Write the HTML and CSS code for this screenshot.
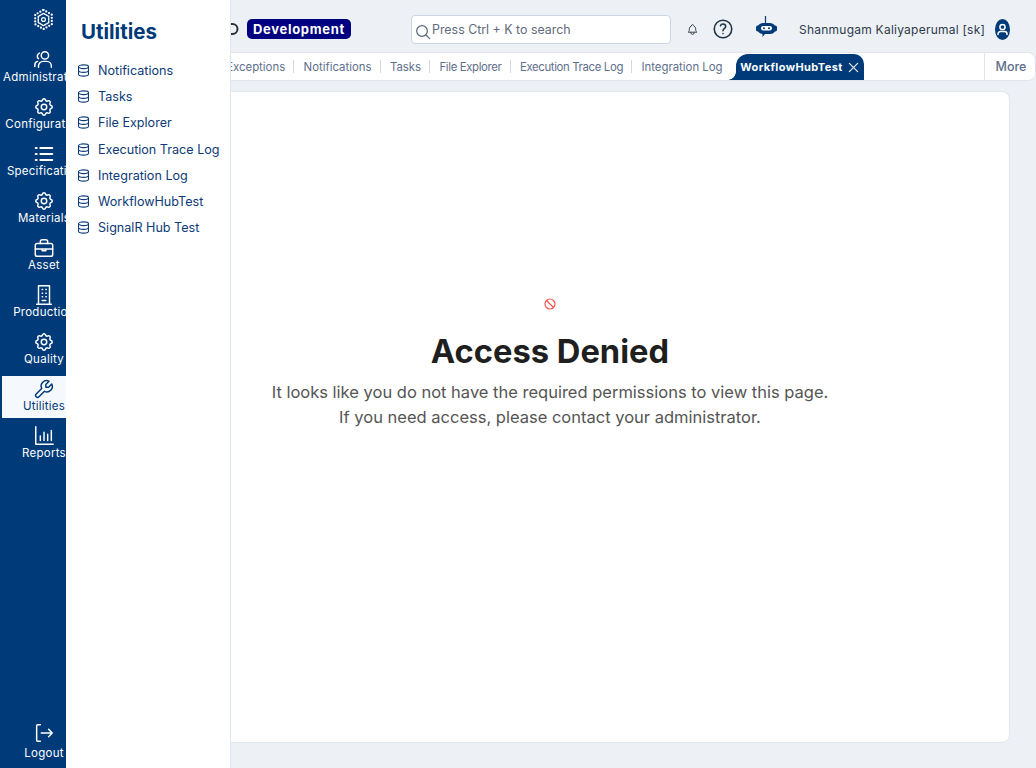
FILE: index.html
```html
<!DOCTYPE html>
<html lang="en">
<head>
<meta charset="utf-8">
<title>Access Denied</title>
<link rel="stylesheet" href="styles.css">
</head>
<body>
<svg class="defs" aria-hidden="true">
  <defs>
    <symbol id="gear" viewBox="0 0 24 24"><path d="M10.325 4.317c.426-1.756 2.924-1.756 3.35 0a1.724 1.724 0 0 0 2.573 1.066c1.543-.94 3.31.826 2.37 2.37a1.724 1.724 0 0 0 1.065 2.572c1.756.426 1.756 2.924 0 3.35a1.724 1.724 0 0 0-1.066 2.573c.94 1.543-.826 3.31-2.37 2.37a1.724 1.724 0 0 0-2.572 1.065c-.426 1.756-2.924 1.756-3.35 0a1.724 1.724 0 0 0-2.573-1.066c-1.543.94-3.31-.826-2.37-2.37a1.724 1.724 0 0 0-1.065-2.572c-1.756-.426-1.756-2.924 0-3.35a1.724 1.724 0 0 0 1.066-2.573c-.94-1.543.826-3.31 2.37-2.37 1 .608 2.296.07 2.572-1.065z"/><circle cx="12" cy="12" r="3"/></symbol>
    <symbol id="db" viewBox="0 0 24 24"><ellipse cx="12" cy="6" rx="8" ry="3"/><path d="M4 6v6c0 1.660 3.580 3 8 3s8-1.340 8-3V6"/><path d="M4 12v6c0 1.660 3.580 3 8 3s8-1.340 8-3v-6"/></symbol>
  </defs>
</svg>

<nav class="rail">
  <svg class="rail-logo" viewBox="0 0 24 24"><circle cx="12" cy="12" r="2.200"/><path class="logo-inner" d="M12 5l6 3.500v7L12 19l-6-3.500v-7z"/><path class="logo-outer" d="M12 1l9.500 5.500v11L12 23l-9.500-5.500v-11z"/></svg>
  <a class="rail-item"><svg class="rail-icon" viewBox="0 0 24 24"><circle cx="13" cy="7" r="4"/><path d="M6 20v-1.500a5 5 0 0 1 5-5h4a5 5 0 0 1 5 5V20"/><path d="M7 4.500a3.500 3.500 0 0 0-1 6M5 13.500a4 4 0 0 0-3 4V19"/></svg><span>Administration</span></a>
  <a class="rail-item"><svg class="rail-icon"><use href="#gear"/></svg><span>Configuration</span></a>
  <a class="rail-item"><svg class="rail-icon" viewBox="0 0 24 24"><path class="thick" d="M8 5.500h13M8 12h13M8 18.500h13M3 5.500h1M3 12h1M3 18.500h1"/></svg><span>Specification</span></a>
  <a class="rail-item"><svg class="rail-icon"><use href="#gear"/></svg><span>Materials</span></a>
  <a class="rail-item"><svg class="rail-icon" viewBox="0 0 24 24"><rect x="2.500" y="7" width="19" height="14" rx="2"/><path d="M8 7V5a2 2 0 0 1 2-2h4a2 2 0 0 1 2 2v2M2.500 13h19M10 13v2h4v-2"/></svg><span>Asset</span></a>
  <a class="rail-item"><svg class="rail-icon" viewBox="0 0 24 24"><path d="M4 22h16M6 22V2h12v20M10 6h.500M14 6h.500M10 10h.500M14 10h.500M10 14h.500M14 14h.500M10 18h4"/></svg><span>Production</span></a>
  <a class="rail-item"><svg class="rail-icon"><use href="#gear"/></svg><span>Quality</span></a>
  <a class="rail-item active"><svg class="rail-icon flip" viewBox="0 0 24 24"><path d="M7 10h3V7L6.500 3.500a6 6 0 0 1 8 8l6 6a2 2 0 0 1-3 3l-6-6a6 6 0 0 1-8-8L7 10"/></svg><span>Utilities</span></a>
  <a class="rail-item"><svg class="rail-icon" viewBox="0 0 24 24"><path d="M3 2v19h19M8 17v-5M12 17V8M16 17v-7M20 17V6"/></svg><span>Reports</span></a>
  <a class="rail-item logout"><svg class="rail-icon" viewBox="0 0 24 24"><path d="M8 3H5a1 1 0 0 0-1 1v16a1 1 0 0 0 1 1h3M9 12h12M17 8l4 4-4 4"/></svg><span>Logout</span></a>
</nav>

<aside class="flyout">
  <h2 class="flyout-title">Utilities</h2>
  <ul class="flyout-list">
    <li><svg class="db"><use href="#db"/></svg>Notifications</li>
    <li><svg class="db"><use href="#db"/></svg>Tasks</li>
    <li><svg class="db"><use href="#db"/></svg>File Explorer</li>
    <li><svg class="db"><use href="#db"/></svg>Execution Trace Log</li>
    <li><svg class="db"><use href="#db"/></svg>Integration Log</li>
    <li><svg class="db"><use href="#db"/></svg>WorkflowHubTest</li>
    <li><svg class="db"><use href="#db"/></svg>SignalR Hub Test</li>
  </ul>
</aside>

<div class="main">
  <header class="topbar">
    <svg class="brand" viewBox="0 0 14 14"><path d="M1 2h5.500a5 5 0 0 1 0 10H1"/></svg>
    <span class="env">Development</span>
    <div class="search">
      <svg class="search-icon" viewBox="0 0 24 24"><circle cx="10.500" cy="10.500" r="8"/><path d="M16.500 16.500L22 22"/></svg>
      <span>Press Ctrl + K to search</span>
    </div>
    <svg class="bell" viewBox="0 0 24 24"><path d="M10 5a2 2 0 1 1 4 0 7 7 0 0 1 4 6v3a4 4 0 0 0 2 3H4a4 4 0 0 0 2-3v-3a7 7 0 0 1 4-6M9 17v1a3 3 0 0 0 6 0v-1"/></svg>
    <svg class="help" viewBox="0 0 24 24"><circle cx="12" cy="12" r="10.500"/><path d="M12 17.500v.01M12 14c0-1.500.7-2 1.500-2.500 1-.6 1.700-1.300 1.700-2.600A3.100 3.100 0 0 0 12 6a3.200 3.200 0 0 0-3 2"/></svg>
    <svg class="bot" viewBox="0 0 21 21"><path class="bot-ant" d="M9.500 0v7"/><path class="bot-body" d="M7 7h7a6 6 0 0 1 5 2.500h.300A1.700 1.700 0 0 1 21 11.200v2.600a1.700 1.700 0 0 1-1.700 1.700H19a6 6 0 0 1-5 2.500H9l-2.500 3v-3A6 6 0 0 1 2 15.500h-.300A1.700 1.700 0 0 1 0 13.800v-2.600a1.700 1.700 0 0 1 1.700-1.700H2A6 6 0 0 1 7 7z"/><rect class="bot-eye" x="5" y="10" width="11" height="4.500" rx="2.200"/><circle class="bot-pupil" cx="8" cy="12.250" r="1"/><circle class="bot-pupil" cx="13" cy="12.250" r="1"/></svg>
    <span class="user">Shanmugam Kaliyaperumal [sk]</span>
    <span class="avatar"><svg viewBox="0 0 15 21"><circle cx="7.500" cy="8" r="2.600"/><path d="M3 15.500v-.5a2.500 2.500 0 0 1 2.500-2.500h4A2.500 2.500 0 0 1 12 15v.5"/></svg></span>
  </header>

  <div class="tabbar">
    <div class="tabs">
      <span class="tab">Exceptions</span>
      <span class="tab">Notifications</span>
      <span class="tab">Tasks</span>
      <span class="tab tight">File Explorer</span>
      <span class="tab tight">Execution Trace Log</span>
      <span class="tab last">Integration Log</span>
      <span class="tab-active">WorkflowHubTest<svg viewBox="0 0 12 12"><path d="M1.500 1.500l9 9M10.500 1.500l-9 9"/></svg></span>
    </div>
    <span class="more">More</span>
  </div>

  <section class="card">
    <svg class="ban" viewBox="0 0 24 24"><circle cx="12" cy="12" r="10"/><path d="M5 5l14 14"/></svg>
    <h1>Access Denied</h1>
    <p>It looks like you do not have the required permissions to view this page.</p>
    <p>If you need access, please contact your administrator.</p>
  </section>
</div>
</body>
</html>
```

FILE: styles.css
```css
* { box-sizing: border-box; }
html, body { height: 100%; }
body {
  margin: 0;
  display: flex;
  overflow: hidden;
  background: #edf1f6;
  font-family: "Inter", "Liberation Sans", sans-serif;
  color: #1f1f1f;
}
.defs { position: absolute; width: 0; height: 0; }
svg { fill: none; stroke: currentColor; stroke-linecap: round; stroke-linejoin: round; }

.rail {
  flex: 0 0 88px;
  width: 88px;
  height: 768px;
  background: #003a78;
  color: #fff;
  display: flex;
  flex-direction: column;
  align-items: center;
  padding-top: 9px;
}
.rail-logo { width: 21px; height: 21px; stroke-width: 1.4; margin-bottom: 17px; flex: none; margin-right: 1px; }
.logo-inner { stroke-dasharray: 1.800 1.200; stroke-width: 1.600; }
.logo-outer { stroke-dasharray: 0 3.630; stroke-width: 2.600; }
.rail-item {
  width: 84px;
  height: 42px;
  margin-bottom: 5px;
  padding-top: 2px;
  display: flex;
  flex-direction: column;
  align-items: center;
  font-size: 11.5px;
  line-height: 17px;
  letter-spacing: .25px;
  white-space: nowrap;
  flex: none;
}
.rail-item span { margin-top: -2px; }
.rail-item.active { background: #f5f8fc; color: #003a78; }
.rail-item.logout { margin-top: auto; margin-bottom: 4px; padding-top: 0; gap: 3px; }
.rail-icon { width: 22px; height: 22px; stroke-width: 1.6; flex: none; }
.thick { stroke-width: 2.200; }
.flip { transform: scaleX(-1); }

.flyout {
  position: absolute;
  z-index: 2;
  left: 66px;
  top: 0;
  bottom: 0;
  width: 165px;
  background: #fff;
  border-right: 1px solid #dfe7f0;
  color: #003a78;
}
.flyout-title {
  margin: 18px 0 11px 15px;
  font-size: 20.5px;
  line-height: 28px;
  font-weight: 700;
}
.flyout-list { list-style: none; margin: 0; padding: 0 0 0 10px; }
.flyout-list li {
  height: 26.3px;
  display: flex;
  align-items: center;
  gap: 7px;
  font-size: 12.6px;
  white-space: nowrap;
  color: #0d3b78;
}
.db { width: 15px; height: 15px; stroke-width: 1.7; flex: none; }

.main { flex: 1; min-width: 0; display: flex; flex-direction: column; }

.topbar { height: 52px; flex: none; display: flex; align-items: center; padding-top: 6px; }
.brand { width: 14px; height: 14px; margin-left: 138px; color: #2b2f38; stroke-width: 2; flex: none; }
.env {
  margin-left: 7px;
  width: 104px;
  height: 20px;
  background: #000080;
  color: #fff;
  border-radius: 5px;
  font-size: 13px;
  font-weight: 700;
  line-height: 20px;
  letter-spacing: .7px;
  text-align: center;
  flex: none;
}
.search {
  margin-left: 60px;
  width: 260px;
  height: 29px;
  background: #fff;
  border: 1px solid #ced6e4;
  border-radius: 4px;
  display: flex;
  align-items: center;
  color: #5f6b7c;
  font-size: 12.4px;
  flex: none;
}
.search-icon { width: 16px; height: 16px; margin: 6px 1px 0 3px; stroke-width: 1.9; color: #5b6b82; flex: none; }
.bell { width: 13px; height: 13px; margin-left: 15px; color: #2b3442; stroke-width: 1.6; flex: none; }
.help { width: 20px; height: 20px; margin-left: 14px; color: #1d3347; stroke-width: 1.9; flex: none; }
.bot { width: 21px; height: 21px; margin: -5px 0 0 23px; flex: none; stroke: none; }
.bot-ant { stroke: #003a78; stroke-width: 1.2; }
.bot-body { fill: #003a78; }
.bot-eye { fill: #fff; }
.bot-pupil { fill: #003a78; }
.user { margin-left: 22px; font-size: 12px; letter-spacing: .24px; color: #2f3a4a; white-space: nowrap; flex: none; width: 196px; }
.avatar { width: 15px; height: 21px; border-radius: 50%; background: #003a78; color: #fff; display: flex; flex: none; }
.avatar svg { width: 15px; height: 21px; stroke-width: 1.5; }

.tabbar {
  height: 29px;
  flex: none;
  display: flex;
  background: #fff;
  border: 1px solid #e2e6ec;
  border-left: 0;
  border-radius: 0 8px 8px 0;
  overflow: hidden;
  margin-bottom: 10px;
}
.tabs { flex: 1; display: flex; align-items: flex-end; min-width: 0; padding-left: 129px; }
.tab {
  height: 27px;
  flex: none;
  display: flex;
  align-items: center;
  position: relative;
  padding: 0 9.2px;
  font-size: 11.4px;
  color: #5f6f8c;
  white-space: nowrap;
}
.tab.tight { letter-spacing: -.36px; }
.tab::after {
  content: "";
  position: absolute;
  right: 0;
  top: 7px;
  height: 13px;
  border-right: 1px solid #d4d9e1;
}
.tab.last::after { display: none; }
.tab-active {
  position: relative;
  height: 26px;
  flex: none;
  width: 128px;
  margin-left: 4.5px;
  padding-left: 4px;
  display: flex;
  align-items: center;
  background: #003a78;
  color: #fff;
  border-radius: 12px 10px 0 0;
  font-size: 11px;
  font-weight: 700;
  letter-spacing: .4px;
  white-space: nowrap;
}
.tab-active::before {
  content: "";
  position: absolute;
  left: -8px;
  bottom: 0;
  width: 8px;
  height: 8px;
  background: radial-gradient(circle at 0 0, transparent 7.5px, #003a78 8px);
}
.tab-active svg { width: 11px; height: 11px; margin-left: 5px; stroke-width: 1.4; color: #dfe6ef; flex: none; }
.more {
  flex: 0 0 51px;
  border-left: 1px solid #e2e6ec;
  display: flex;
  align-items: center;
  justify-content: center;
  padding-left: 2px;
  font-size: 12.5px;
  font-weight: 500;
  color: #5f6f8c;
}

.card {
  flex: none;
  height: 652px;
  margin: 0 26px 0 2px;
  background: #fff;
  border: 1px solid #dfe7f0;
  border-radius: 8px;
  display: flex;
  flex-direction: column;
  align-items: center;
  padding-top: 206px;
  color: #555;
}
.ban { width: 12px; height: 12px; color: #f4544c; stroke-width: 2.4; flex: none; }
.card h1 {
  margin: 18px 0 6px;
  font-size: 32.7px;
  line-height: 46px;
  font-weight: 700;
  color: #1f1f1f;
}
.card p { margin: 0; font-size: 16.5px; line-height: 25px; white-space: nowrap; }
```
